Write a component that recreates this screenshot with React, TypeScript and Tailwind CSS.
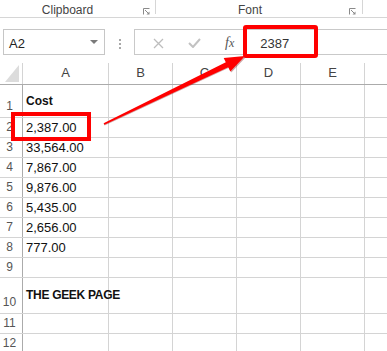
import React from "react";

const FONT = { fontFamily: '"Liberation Sans", Arial, sans-serif' };

const cols = [
  { label: "A", w: "w-[86px]" },
  { label: "B", w: "w-[64px]" },
  { label: "C", w: "w-[64px]" },
  { label: "D", w: "w-[64px]" },
  { label: "E", w: "w-[64px]" },
];

type Row = { n: number; h: string; a?: string; bold?: boolean; pb?: string; npb?: string };

const rows: Row[] = [
  { n: 1, h: "h-[33px]", a: "Cost", bold: true, pb: "pb-[7px]", npb: "pb-[2px]" },
  { n: 2, h: "h-[20px]", a: "2,387.00" },
  { n: 3, h: "h-[20px]", a: "33,564.00" },
  { n: 4, h: "h-[20px]", a: "7,867.00" },
  { n: 5, h: "h-[20px]", a: "9,876.00" },
  { n: 6, h: "h-[20px]", a: "5,435.00" },
  { n: 7, h: "h-[20px]", a: "2,656.00" },
  { n: 8, h: "h-[20px]", a: "777.00" },
  { n: 9, h: "h-[20px]" },
  { n: 10, h: "h-[36px]", a: "THE GEEK PAGE", bold: true, pb: "pb-[9px]", npb: "pb-[2px]" },
  { n: 11, h: "h-[20px]" },
  { n: 12, h: "h-[20px]" },
];

function Launcher() {
  return (
    <svg width="7" height="7" viewBox="0 0 7 7" className="block">
      <path d="M0.5 6.5 V0.5 H6.5" stroke="#8a8a8a" strokeWidth="1" fill="none" />
      <path d="M2 2 L5.5 5.5" stroke="#8a8a8a" strokeWidth="1" />
      <path d="M6.5 3.5 V6.5 H3.5 Z" fill="#8a8a8a" />
    </svg>
  );
}

export default function App() {
  return (
    <div className="relative w-[387px] h-[351px] overflow-hidden bg-white text-[#222]" style={FONT}>
      {/* Ribbon group labels */}
      <div className="flex h-[18px] border-b border-[#d6d6d6] items-start">
        <div className="w-[135px] text-center text-[12px] leading-[15px] text-[#444] pt-[3px]">Clipboard</div>
        <div className="w-[20px] pt-[8px] pl-[8px]"><Launcher /></div>
        <div className="w-px h-[14px] bg-[#d6d6d6]" />
        <div className="w-[188px] text-center text-[12px] leading-[15px] text-[#444] pt-[3px]">Font</div>
        <div className="w-[18px] pt-[8px] pl-[5px]"><Launcher /></div>
        <div className="w-px h-[14px] bg-[#d6d6d6]" />
      </div>

      {/* Formula bar */}
      <div className="h-[45px] pt-[11px] flex items-start">
        <div className="ml-[3px] w-[102px] h-[26px] border border-[#c6c6c6] flex items-center justify-between pl-[5px] pr-[6px]">
          <span className="text-[13px] leading-[17px] pt-[2px] text-[#222]">A2</span>
          <svg width="8" height="4" viewBox="0 0 8 4"><path d="M0 0 H8 L4 4 Z" fill="#7a7a7a" /></svg>
        </div>
        <div className="w-[29px] h-[26px] flex flex-col items-center justify-center gap-[2px] pt-[3px]">
          <div className="w-[2px] h-[2px] bg-[#a8a8a8]" />
          <div className="w-[2px] h-[2px] bg-[#a8a8a8]" />
          <div className="w-[2px] h-[2px] bg-[#a8a8a8]" />
        </div>
        <div className="flex-1 h-[26px] border border-r-0 border-[#c9c9c9] flex items-center">
          <div className="w-[18px]" />
          <svg width="11" height="11" viewBox="0 0 11 11" className="mt-[2px]">
            <path d="M1 1 L10 10 M10 1 L1 10" stroke="#bdbdbd" strokeWidth="1.3" />
          </svg>
          <div className="w-[24px]" />
          <svg width="13" height="10" viewBox="0 0 13 10" className="mt-[2px]">
            <path d="M1 5 L5 9 L12 1" stroke="#c2c2c2" strokeWidth="2" fill="none" />
          </svg>
          <div className="w-[24px]" />
          <span className="text-[14px] leading-[17px] italic text-[#555] pt-[2px]" style={{ fontFamily: '"Liberation Serif", "Times New Roman", serif' }}>
            f<span className="text-[12px]">x</span>
          </span>
          <div className="w-[26px]" />
          <span className="text-[13px] leading-[17px] pt-[2px] text-[#333]">2387</span>
        </div>
      </div>

      {/* Column headers */}
      <div className="flex h-[22px] border-b border-[#ababab]">
        <div className="w-[23px] shrink-0 border-r border-[#d4d4d4] relative">
          <svg width="14" height="17" viewBox="0 0 14 17" className="absolute left-[5px] top-[2px]">
            <path d="M14 0 V17 H0 Z" fill="#dcdcdc" />
          </svg>
        </div>
        {cols.map((c) => (
          <div key={c.label} className={`${c.w} shrink-0 border-r border-[#d4d4d4] flex items-end justify-center pb-[3px] text-[13px] leading-[17px] text-[#444]`}>
            {c.label}
          </div>
        ))}
        <div className="flex-1" />
      </div>

      {/* Rows */}
      {rows.map((r) => (
        <div key={r.n} className={`flex ${r.h} border-b border-[#d4d4d4]`}>
          <div className={`w-[23px] shrink-0 border-r border-[#ababab] flex items-end justify-center pr-[3px] text-[12px] leading-[17px] text-[#555] ${r.npb ?? "pb-[1px]"}`}>
            {r.n}
          </div>
          <div className={`w-[86px] shrink-0 border-r border-[#d4d4d4] flex items-end pl-[3px] leading-[17px] whitespace-nowrap text-[#111] ${r.pb ?? "pb-[1px]"} ${r.bold ? "font-bold text-[12px]" : "text-[13px]"} ${r.n === 10 ? "tracking-[-0.3px]" : ""}`}>
            {r.a ?? ""}
          </div>
          <div className="w-[64px] shrink-0 border-r border-[#d4d4d4]" />
          <div className="w-[64px] shrink-0 border-r border-[#d4d4d4]" />
          <div className="w-[64px] shrink-0 border-r border-[#d4d4d4]" />
          <div className="w-[64px] shrink-0 border-r border-[#d4d4d4]" />
          <div className="flex-1" />
        </div>
      ))}

      {/* Annotations */}
      <div className="absolute left-[11px] top-[112px] w-[80px] h-[29px] border-[4px] border-[#ff0000]" />
      <div className="absolute left-[243px] top-[25px] w-[75px] h-[33px] border-[4px] border-[#ff0000] rounded-[3px]" />
      <svg className="absolute left-0 top-0 pointer-events-none" width="387" height="351" viewBox="0 0 387 351">
        <polygon
          points="104.6,125.4 229,67.8 231.3,72.5 246,57 224.7,59 226.8,63.5 103.9,124"
          fill="#7a0000"
          opacity="0.35"
        />
        <polygon
          points="103.6,123.3 225.8,62.2 223.7,58 245,56 230.3,71.5 228.2,67.2 104.4,124.7"
          fill="#ff0000"
        />
      </svg>
    </div>
  );
}
